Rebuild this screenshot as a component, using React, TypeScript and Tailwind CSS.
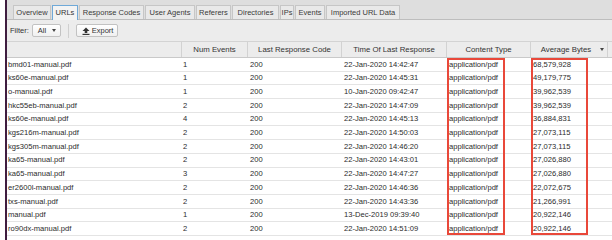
import React from "react";

const tabs = [
  { label: "Overview", w: 38 },
  { label: "URLs", w: 26, active: true },
  { label: "Response Codes", w: 65 },
  { label: "User Agents", w: 50 },
  { label: "Referers", w: 35 },
  { label: "Directories", w: 47 },
  { label: "IPs", w: 14 },
  { label: "Events", w: 30 },
  { label: "Imported URL Data", w: 74 },
];

const cols = [
  { label: "", w: "w-[175px]" },
  { label: "Num Events", w: "w-[66px]" },
  { label: "Last Response Code", w: "w-[94px]" },
  { label: "Time Of Last Response", w: "w-[105px]" },
  { label: "Content Type", w: "w-[84px]" },
  { label: "Average Bytes", w: "w-[77px]", sort: true },
];

const rows = [
  ["bmd01-manual.pdf", "1", "22-Jan-2020 14:42:47", "68,579,928"],
  ["ks60e-manual.pdf", "1", "22-Jan-2020 14:45:31", "49,179,775"],
  ["o-manual.pdf", "1", "10-Jan-2020 09:42:47", "39,962,539"],
  ["hkc55eb-manual.pdf", "2", "22-Jan-2020 14:47:09", "39,962,539"],
  ["ks60e-manual.pdf", "4", "22-Jan-2020 14:45:13", "36,884,831"],
  ["kgs216m-manual.pdf", "2", "22-Jan-2020 14:50:03", "27,073,115"],
  ["kgs305m-manual.pdf", "2", "22-Jan-2020 14:46:20", "27,073,115"],
  ["ka65-manual.pdf", "2", "22-Jan-2020 14:43:01", "27,026,880"],
  ["ka65-manual.pdf", "3", "22-Jan-2020 14:47:27", "27,026,880"],
  ["er2600l-manual.pdf", "2", "22-Jan-2020 14:46:36", "22,072,675"],
  ["txs-manual.pdf", "2", "22-Jan-2020 14:43:36", "21,266,991"],
  ["manual.pdf", "1", "13-Dec-2019 09:39:40", "20,922,146"],
  ["ro90dx-manual.pdf", "2", "22-Jan-2020 14:51:09", "20,922,146"],
];

function ExportIcon() {
  return (
    <svg width="8" height="8" viewBox="0 0 8 8" className="shrink-0">
      <path d="M4 0.5 L7.5 4 H5.3 V6 H2.7 V4 H0.5 Z" fill="#333" />
      <rect x="0.5" y="6.8" width="7" height="1.2" fill="#333" />
    </svg>
  );
}

export default function App() {
  return (
    <div className="w-[612px] h-[240px] bg-white flex overflow-hidden font-['Liberation_Sans',Arial,sans-serif] text-[#2b2b2b]">
      <div className="w-[5px] shrink-0" />
      <div className="w-[2px] shrink-0 bg-[#3f1d40]" />
      <div className="flex-1 flex flex-col relative min-w-0">
        {/* tab strip */}
        <div className="h-[20px] shrink-0 bg-[#dedede] border-b border-[#bdbdbd] flex items-end pl-[6px]">
          {tabs.map((t) =>
            t.active ? (
              <div
                key={t.label}
                style={{ width: t.w }}
                className="h-[15px] -mb-px mr-px bg-[#f3f3f3] border border-b-0 border-[#6fa9d8] flex items-center justify-center text-[7.5px] text-[#333]"
              >
                {t.label}
              </div>
            ) : (
              <div
                key={t.label}
                style={{ width: t.w }}
                className="h-[14px] mr-px bg-[#e9e9e9] border border-b-0 border-[#c6c6c6] flex items-center justify-center text-[7.5px] text-[#3a3a3a] whitespace-nowrap"
              >
                {t.label}
              </div>
            )
          )}
        </div>

        {/* toolbar */}
        <div className="h-[21px] shrink-0 bg-[#ececec] flex items-center pl-[3px] text-[7.5px] text-[#333]">
          <span>Filter:</span>
          <div className="ml-[3px] w-[29px] h-[13px] border border-[#c2c2c2] rounded-[2px] bg-gradient-to-b from-white to-[#f0f0f0] flex items-center pl-[5px] gap-[6px]">
            <span>All</span>
            <span className="w-0 h-0 border-l-[2.5px] border-r-[2.5px] border-t-[3px] border-l-transparent border-r-transparent border-t-[#444]" />
          </div>
          <div className="ml-[7px] w-px h-[14px] bg-[#cfcfcf]" />
          <div className="ml-[7px] w-[42px] h-[13px] border border-[#c2c2c2] rounded-[2px] bg-gradient-to-b from-white to-[#f0f0f0] flex items-center pl-[5px] gap-[2px]">
            <ExportIcon />
            <span>Export</span>
          </div>
        </div>

        {/* header */}
        <div className="h-[17px] shrink-0 bg-[#ececec] border-t border-[#d3d3d3] border-b border-b-[#c9c9c9] flex text-[7.8px] text-[#333]">
          {cols.map((c, i) => (
            <div
              key={i}
              className={`${c.w} shrink-0 border-r border-[#d2d2d2] flex items-center justify-center relative`}
            >
              <span className={c.sort ? "-ml-[6px]" : ""}>{c.label}</span>
              {c.sort && (
                <span className="absolute right-[3px] top-[6px] w-0 h-0 border-l-[2.5px] border-r-[2.5px] border-t-[3.5px] border-l-transparent border-r-transparent border-t-[#444]" />
              )}
            </div>
          ))}
          <div className="flex-1" />
        </div>

        {/* rows */}
        <div className="flex flex-col text-[7.6px]">
          {rows.map((r, i) => (
            <div key={i} className="h-[13.7px] flex border-b border-[#e4e4e4]">
              <div className="w-[175px] shrink-0 overflow-hidden flex items-center whitespace-nowrap pl-px">
                {r[0]}
              </div>
              <div className="w-[66px] shrink-0 flex items-center pl-px">{r[1]}</div>
              <div className="w-[94px] shrink-0 flex items-center pl-[2px]">200</div>
              <div className="w-[105px] shrink-0 flex items-center pl-[2px]">{r[2]}</div>
              <div className="w-[84px] shrink-0 flex items-center pl-[2px]">application/pdf</div>
              <div className="w-[77px] shrink-0 flex items-center pl-[2px]">{r[3]}</div>
              <div className="flex-1" />
            </div>
          ))}
        </div>

        {/* annotation boxes */}
        <div className="absolute left-[440px] top-[58px] w-[58px] h-[177px] border-2 border-[#e9483a]" />
        <div className="absolute left-[524px] top-[58px] w-[57px] h-[177px] border-2 border-[#e9483a]" />
      </div>
    </div>
  );
}
